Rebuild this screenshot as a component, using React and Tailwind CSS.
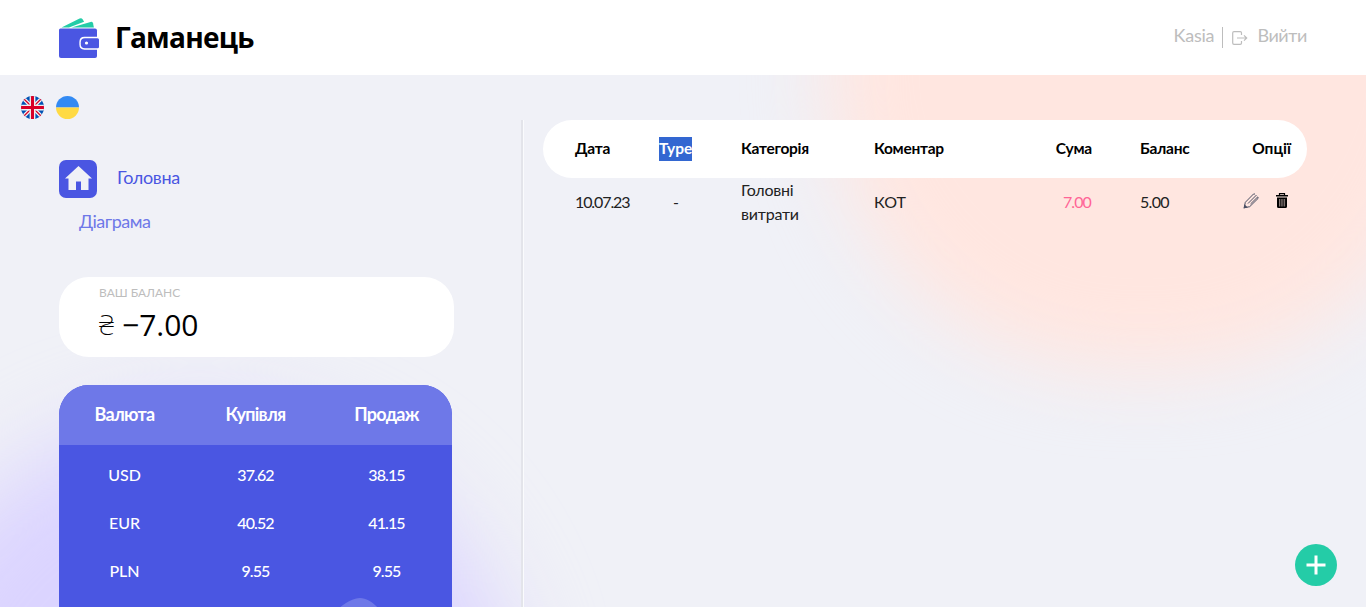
import React from 'react';

const rates = [
  ['USD', '37.62', '38.15'],
  ['EUR', '40.52', '41.15'],
  ['PLN', '9.55', '9.55'],
];

function WalletLogo() {
  return (
    <svg width="40" height="40" viewBox="0 0 40 40" className="block">
      <path d="M2.500 9.500 20.600.5q2-.9 3 .8l1.500 2.500L10 9.500Z" fill="#24cca7" />
      <path d="M12.500 9.500 31.500 3.900q2-.5 2.500 1.300l.9 4.300Z" fill="#24cca7" />
      <path d="M1.500 10.500H36q2 0 2 2V38q0 2-2 2H2q-2 0-2-2V12q0-1.500 1.500-1.500Z" fill="#4a56e2" />
      <path d="M42 19.500H25.500q-4.500 0-4.500 4.500v2.500q0 4.500 4.500 4.500H42" fill="#fff" stroke="#fff" strokeWidth="1.300" />
      <path d="M38.500 20.200H26q-4.200 0-4.200 4v2q0 4 4.200 4h12.500q1.500 0 1.500-1.500v-7q0-1.500-1.500-1.500Z" fill="#4a56e2" />
      <circle cx="27.500" cy="25" r="1.600" fill="#fff" />
    </svg>
  );
}

function FlagUk() {
  return (
    <svg width="23" height="23" viewBox="0 0 24 24" className="block">
      <clipPath id="uk"><circle cx="12" cy="12" r="12" /></clipPath>
      <g clipPath="url(#uk)">
        <path fill="#0052b4" d="M0 0h24v24H0z" />
        <path stroke="#f0f0f0" strokeWidth="4" d="m0 0 24 24M24 0 0 24" />
        <path stroke="#d80027" strokeWidth="1.300" d="m0 0 24 24M24 0 0 24" />
        <path stroke="#f0f0f0" strokeWidth="6" d="M12 0v24M0 12h24" />
        <path stroke="#d80027" strokeWidth="3.200" d="M12 0v24M0 12h24" />
      </g>
    </svg>
  );
}

function FlagUa() {
  return (
    <svg width="23" height="23" viewBox="0 0 24 24" className="block">
      <path fill="#338af3" d="M0 12a12 12 0 0 1 24 0z" />
      <path fill="#ffda44" d="M0 12a12 12 0 0 0 24 0z" />
    </svg>
  );
}

function PencilIcon() {
  return (
    <svg width="16" height="16" viewBox="0 0 16 16" fill="none" stroke="#4b4f63" strokeWidth="1" className="block">
      <path d="M1.300 14.700 2.300 9.300 10.500 1H12M1.300 14.700 6.700 13.700 15 5.500V4M5 10.500 13.500 2M7.500 11 14.800 3.800" />
      <path d="M.5 15.500 1.400 11.200 4.800 14.600Z" fill="#4b4f63" stroke="none" />
    </svg>
  );
}

function TrashIcon() {
  return (
    <svg width="12" height="16" viewBox="0 0 12 16" className="block">
      <path d="M3.500 2V.6h5V2" fill="none" stroke="#000" strokeWidth="1.200" />
      <path d="M0 2h12v1.600H0zM1 4.600h10v8.900q0 1.500-1.500 1.500h-7Q1 15 1 13.500Z" fill="#000" />
      <path d="M3.500 6v7.500M5.200 6v7.500M6.900 6v7.500M8.600 6v7.500" stroke="#a99a98" strokeWidth=".8" />
    </svg>
  );
}

function Header() {
  return (
    <header className="relative flex h-[75px] items-center justify-between bg-white px-[59px]">
      <div className="flex items-center gap-[16px]">
        <WalletLogo />
        <span className="pb-[2px] font-['Open_Sans','Noto_Sans',sans-serif] text-[28px] leading-[40px] font-bold tracking-[-0.75px]">Гаманець</span>
      </div>
      <div className="flex items-center pb-[2px] text-[18px] leading-[27px] tracking-[-0.2px] text-[#bdbdbd]">
        <span className="pb-[2px]">Kasia</span>
        <span className="mt-[2px] ml-[8px] h-[21px] w-px bg-[#bdbdbd]" />
        <svg className="mt-[3px] ml-[9px] block" width="16" height="14" viewBox="0 0 16 14" fill="none" stroke="#bdbdbd" strokeWidth="1.200">
          <path d="M9.500 4V2Q9.500.7 8.200.7H2Q.7.7.7 2v10q0 1.300 1.300 1.300h6.200q1.300 0 1.300-1.300v-2M5 7h9.500M12 4.300 14.700 7 12 9.700" />
        </svg>
        <span className="ml-[9px] pb-[2px] tracking-[-0.4px]">Вийти</span>
      </div>
    </header>
  );
}

function Sidebar() {
  return (
    <aside className="w-[521px] shrink-0 pt-[40px] pl-[59px]">
      <nav className="tracking-[-0.35px]">
        <div className="flex h-[38px] items-center gap-[20px] text-[18px] leading-[27px] text-[#4a56e2]">
          <span className="flex size-[38px] items-center justify-center rounded-[7px] bg-[#4a56e2] pb-[2px]">
            <svg width="27" height="24" viewBox="0 0 27 24" className="block">
              <path fill="#f0f1f7" d="M13.500 0 27 12.500h-3.500V24H16v-8.500h-5V24H3.500V12.500H0Z" />
            </svg>
          </span>
          <span className="pb-[3px]">Головна</span>
        </div>
        <div className="mt-[10px] pl-[20px] text-[18px] leading-[27px] tracking-[-0.5px] text-[#6e78e8]">Діаграма</div>
      </nav>
      <section className="mt-[42px] h-[80px] w-[395px] rounded-[30px] bg-white pt-[7px] pl-[40px]">
        <div className="text-[12px] leading-[18px] text-[#bdbdbd]">ВАШ БАЛАНС</div>
        <div className="flex gap-[9px] font-['Open_Sans','Noto_Sans',sans-serif] text-[30px] leading-[45px]">
          <span className="w-[14px] font-['Noto_Sans',sans-serif] text-[28px] font-extralight">₴</span>
          <span>−7.00</span>
        </div>
      </section>
      <section className="relative mt-[28px] h-[347px] w-[393px] overflow-hidden rounded-[30px] bg-[#4a56e2] text-center text-white">
        <div className="grid h-[60px] grid-cols-3 items-center bg-[#6e78e8] pb-[2px] text-[18px] leading-[27px] font-bold tracking-[-0.7px]">
          <span>Валюта</span><span>Купівля</span><span>Продаж</span>
        </div>
        <div className="pt-[6px]">
          {rates.map((r) => (
            <div key={r[0]} className="grid h-[48px] grid-cols-3 items-center text-[16px] leading-[24px] font-medium">
              <span>{r[0]}</span>
              <span className="tracking-[-0.9px]">{r[1]}</span>
              <span className="tracking-[-0.9px]">{r[2]}</span>
            </div>
          ))}
        </div>
        <svg className="absolute top-[213px] left-0" width="393" height="134" viewBox="0 0 393 134">
          <path fill="#6e78e8" d="M0 60C40 40 80 90 140 90C230 90 270 0 301 0S351 90 393 90V134H0Z" />
        </svg>
      </section>
    </aside>
  );
}

function Transactions() {
  return (
    <main className="pl-[19px] text-[16px]">
      <div className="flex h-[58px] w-[764px] items-center rounded-[30px] bg-white pl-[32px] text-[15.5px] leading-[22px] font-bold tracking-[-0.25px] [&>span]:pb-[3px]">
        <span className="w-[84px]">Дата</span>
        <span className="w-[82px] !pb-0"><span className="inline-block bg-[#3367d1] pb-[2px] align-top tracking-[0px] text-white">Type</span></span>
        <span className="w-[133px]">Категорія</span>
        <span className="w-[133px]">Коментар</span>
        <span className="w-[85px] text-right">Сума</span>
        <span className="w-[110px] pl-[48px]">Баланс</span>
        <span className="w-[89px] text-right tracking-[0px]">Опції</span>
      </div>
      <div className="flex h-[50px] w-[764px] items-center pl-[32px] leading-[24px] text-[#222] [&>span]:pb-[2px]">
        <span className="w-[84px] tracking-[-1.1px]">10.07.23</span>
        <span className="w-[82px] pl-[14px]">-</span>
        <span className="w-[133px] pr-[50px] tracking-[-0.2px]">Головні витрати</span>
        <span className="w-[133px]">КОТ</span>
        <span className="w-[84px] text-right tracking-[-0.9px] text-[#ff6596]">7.00</span>
        <span className="w-[111px] pl-[49px] tracking-[-0.7px]">5.00</span>
        <span className="flex flex-1 items-center gap-[17px] pl-[41px] !pb-[5px]"><PencilIcon /><TrashIcon /></span>
      </div>
    </main>
  );
}

export default function App() {
  return (
    <div className="relative h-[607px] w-[1366px] overflow-hidden bg-[#f0f1f7] font-['Lato','Noto_Sans',sans-serif] text-black">
      <div className="absolute top-[-220px] left-[828px] h-[590px] w-[630px] rounded-full bg-[#ffe6e0] blur-[38px]" />
      <div className="absolute top-[418px] left-[-120px] size-[640px] rounded-full bg-[#dbd4ff] blur-[44px]" />
      <Header />
      <div className="relative flex gap-[12px] pt-[21px] pl-[21px]"><FlagUk /><FlagUa /></div>
      <div className="relative mt-px flex">
        <Sidebar />
        <div className="w-[3px] shrink-0 border-r border-[#fafbfd] bg-[#e3e4ea]" />
        <Transactions />
      </div>
      <button aria-label="+" className="absolute top-[544px] left-[1295px] flex size-[42px] items-center justify-center rounded-full bg-[#24cca7]">
        <svg width="20" height="20" viewBox="0 0 20 20" stroke="#fff" strokeWidth="3" className="block">
          <path d="M10 .5v19M.5 10h19" />
        </svg>
      </button>
    </div>
  );
}
